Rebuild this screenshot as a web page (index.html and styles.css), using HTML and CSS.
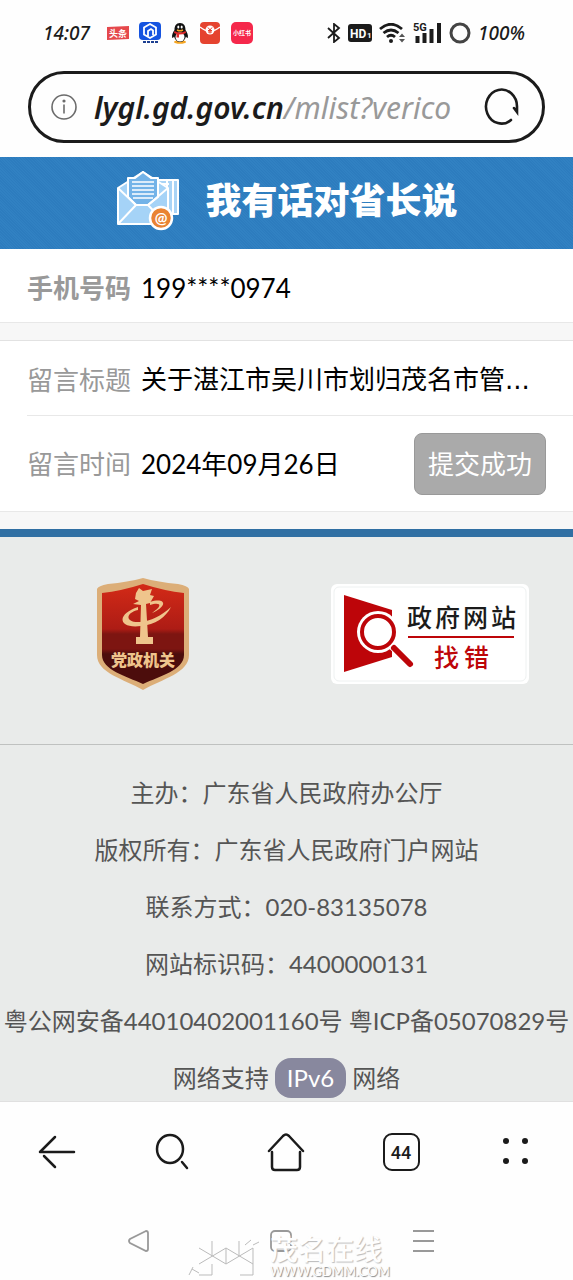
FILE: index.html
```
<!DOCTYPE html>
<html lang="zh-CN">
<head>
  <meta charset="UTF-8" />
  <meta name="viewport" content="width=device-width, initial-scale=1" />
  <title>我有话对省长说</title>
  <link rel="stylesheet" href="styles.css">
</head>
<body>
  <div class="status-bar">
    <span class="clock">14:07</span>
    <div class="apps">
      <svg width="22" height="14" viewBox="0 0 22 14">
        <path d="M0 1l22-1v13L0 14z" fill="#e5484c"/>
        <text x="11" y="11" class="app-text" font-size="9">头条</text>
      </svg>
      <svg width="22" height="22" viewBox="0 0 22 22">
        <rect width="22" height="18" rx="4" fill="#1554e0"/>
        <path d="M11 2l6 3.500v7L11 16l-6-3.500v-7z" fill="none" stroke="#fff" stroke-width="1.800"/>
        <path d="M9 14V9l3-2 2 1.500V13" fill="none" stroke="#fff" stroke-width="1.800"/>
        <path d="M4 20h3m1 0h3m1 0h3m1 0h3" stroke="#1d3f91" stroke-width="2"/>
      </svg>
      <svg width="18" height="22" viewBox="0 0 18 22">
        <ellipse cx="9" cy="20" rx="6" ry="1.800" fill="#f5a623"/>
        <path d="M9 1c-4 0-5.500 3-5.500 7C2 10 .500 13 1.200 16c.800 0 1.500-1 1.800-1.500C4 18 6 20 9 20s5-2 6-5.500c.300.500 1 1.500 1.800 1.500.700-3-.800-6-2.300-8 0-4-1.500-7-5.500-7z" fill="#111"/>
        <ellipse cx="9" cy="15" rx="4.500" ry="4.500" fill="#fff"/>
        <ellipse cx="7.300" cy="5" rx="1" ry="1.500" fill="#fff"/>
        <ellipse cx="10.700" cy="5" rx="1" ry="1.500" fill="#fff"/>
        <path d="M6 8q3 1.500 6 0" stroke="#f5a623" stroke-width="1.500" fill="none"/>
        <path d="M3.500 9q5.500 3 11 0l.500 2q-3 1.500-7 1.500v3H5.500V12L3 11z" fill="#e02a2a"/>
      </svg>
      <svg width="22" height="22" viewBox="0 0 22 22">
        <rect x="1" width="20" height="22" rx="4" fill="#e5432f"/>
        <path d="M1 5q5 4 10 4t10-4" stroke="#fff" stroke-width="1.500" fill="none"/>
        <circle cx="11" cy="8" r="4.500" fill="#fff"/>
        <path d="M9 5.500l2 2.500 2-2.500M11 8v3.500M9 8.500h4M9 10h4" stroke="#e5432f" fill="none"/>
      </svg>
      <svg width="22" height="22" viewBox="0 0 22 22">
        <rect width="22" height="22" rx="5" fill="#f5284b"/>
        <text x="11" y="13" class="app-text" font-size="6">小红书</text>
      </svg>
    </div>
    <div class="signals">
      <svg width="14" height="20" viewBox="0 0 14 20">
        <path d="M1 5l11 10-5 4V1l5 4L1 15" fill="none" stroke="#1b1b1b" stroke-width="1.800"/>
      </svg>
      <svg width="24" height="18" viewBox="0 0 24 18">
        <rect width="24" height="18" rx="3" fill="#1b1b1b"/>
        <text x="2" y="14" class="hd" font-size="12">HD</text>
        <text x="19" y="14" class="hd" font-size="8">1</text>
      </svg>
      <svg width="27" height="20" viewBox="0 0 27 20">
        <path d="M1 6q11-9.500 22 0M4.500 10q7.500-6 15 0M8 14q4-3.500 8 0" fill="none" stroke="#1b1b1b" stroke-width="2.800"/>
        <circle cx="12" cy="18" r="2" fill="#1b1b1b"/>
        <path d="M20 14l3-3.500 3 3.500zM20 16l3 3.500 3-3.500z" fill="#555"/>
      </svg>
      <svg width="29" height="22" viewBox="0 0 29 22">
        <text x="0" y="9" class="net" font-size="11">5G</text>
        <path d="M4.500 21v-7M11.500 21V11M18.500 21V7M26 21V1" stroke="#1b1b1b" stroke-width="4"/>
      </svg>
      <svg width="22" height="22" viewBox="0 0 22 22">
        <circle cx="11" cy="11" r="9" fill="none" stroke="#444" stroke-width="3"/>
      </svg>
      <span class="battery">100%</span>
    </div>
  </div>

  <header class="browser-bar">
    <div class="address">
      <button type="button" class="icon-btn" aria-label="网站信息">
        <svg width="28" height="28" viewBox="0 0 28 28" fill="none" stroke="#6b6b6b" stroke-width="1.600">
          <circle cx="14" cy="14" r="12"/>
          <path d="M14 11.500v9"/>
          <circle cx="14" cy="8" r=".800" fill="#6b6b6b"/>
        </svg>
      </button>
      <button type="button" class="url"><b>lygl.gd.gov.cn</b>/mlist?verico</button>
      <button type="button" class="icon-btn" aria-label="刷新">
        <svg width="38" height="38" viewBox="0 0 38 38" fill="none" stroke="#1b1b1b" stroke-width="2.600" stroke-linecap="round">
          <path d="M28 32A15.500 17 0 1 1 34 19v5l-3-4"/>
        </svg>
      </button>
    </div>
  </header>

  <main>
    <div class="banner">
      <svg width="64" height="62" viewBox="0 0 64 62" stroke="#fff" stroke-width="2" stroke-linejoin="round">
        <path d="M34 10h27v34H34z" fill="#a9d4f6"/>
        <path d="M40 14h12M50 11v34M56 11v34" fill="none"/>
        <path d="M1 18L26 2l25 16v36H1z" fill="#a5d3f7"/>
        <path d="M11 27V8h7l8-6 8 6h7v19L31 35H19z" fill="#73b3e8"/>
        <path d="M15 12h22M15 16h22M15 20h22M15 24h22M16 28h20" fill="none" stroke-width="1.600"/>
        <path d="M1 54l18-19h12l18 19M1 18l18 17M51 18L31 35" fill="none"/>
        <circle cx="44" cy="48" r="11" fill="#e98332" stroke-width="2.500"/>
        <text x="44" y="53" text-anchor="middle" class="at" font-size="15" stroke="none">@</text>
      </svg>
      <h1>我有话对省长说</h1>
    </div>

    <section class="card phone-card">
      <div class="row">
        <span class="name strong">手机号码</span>
        <span class="value">199****0974</span>
      </div>
    </section>

    <section class="card message-card">
      <div class="row title-row">
        <span class="name">留言标题</span>
        <span class="value ellipsis">关于湛江市吴川市划归茂名市管...</span>
      </div>
      <div class="row time-row">
        <span class="name">留言时间</span>
        <span class="value">2024年09月26日</span>
        <button type="button" class="state">提交成功</button>
      </div>
    </section>

    <footer class="site-footer">
      <div class="marks">
        <a href="#" aria-label="党政机关">
          <svg width="94" height="114" viewBox="0 0 94 114">
            <defs>
              <linearGradient id="shield" x1="0" y1="0" x2="0" y2="1">
                <stop offset="0" stop-color="#d32a17"/>
                <stop offset=".45" stop-color="#ad1c15"/>
                <stop offset=".5" stop-color="#7d1511"/>
                <stop offset=".65" stop-color="#7d1511"/>
                <stop offset=".7" stop-color="#4c0d0c"/>
              </linearGradient>
            </defs>
            <path d="M1 12Q2 9 12 7q20-2 35-6 15 4 35 6 10 2 11 5v66c0 18-27 24-46 35C28 102 1 96 1 78z" fill="#dcae78"/>
            <path d="M6 16Q25 14 47 7q22 7 41 9v62c0 15-24 21-41 29C30 99 6 93 6 78z" fill="url(#shield)"/>
            <path d="M43 24l-4-2 1-6 3-5 4 3 9-2-2 6 4 1-4 7-4 1 2 33h5v7H40v-7h4l1-32-8-1z" fill="#efc48c"/>
            <path d="M42 30C20 37 22 52 45 49c14-1 25-9 30-19-10 9-20 14-31 15-15 1-15-9-2-12z" fill="#efc48c"/>
            <path d="M54 28c10-3 14 0 2 8 18-8 12-16-2-11z" fill="#efc48c"/>
            <text x="47" y="89" text-anchor="middle" class="shield-text" font-size="16">党政机关</text>
          </svg>
        </a>
        <a href="#" aria-label="政府网站找错">
          <svg width="198" height="100" viewBox="0 0 198 100">
            <rect width="198" height="100" rx="6" fill="#fff"/>
            <rect x="3" y="3" width="192" height="94" rx="5" fill="none" stroke="#eef1f1" stroke-width="1"/>
            <path d="M13 11l48 15v47L13 88z" fill="#bd0509"/>
            <path d="M50 50l32 30" stroke="#fff" stroke-width="10"/>
            <circle cx="47" cy="48" r="21" fill="#fff"/>
            <circle cx="47" cy="48" r="16" fill="#fff" stroke="#bd0509" stroke-width="4"/>
            <path d="M63 64l16 16" stroke="#bd0509" stroke-width="6" stroke-linecap="round"/>
            <text x="76" y="43" font-size="25" class="mark-text">政</text>
            <text x="104" y="43" font-size="25" class="mark-text">府</text>
            <text x="132" y="43" font-size="25" class="mark-text">网</text>
            <text x="160" y="43" font-size="25" class="mark-text">站</text>
            <path d="M77 53h106" stroke="#bd0509" stroke-width="2"/>
            <text x="103" y="83" font-size="25" class="mark-text red">找</text>
            <text x="133" y="83" font-size="25" class="mark-text red">错</text>
          </svg>
        </a>
      </div>
      <div class="info">
        <p>主办：广东省人民政府办公厅</p>
        <p>版权所有：广东省人民政府门户网站</p>
        <p>联系方式：020-83135078</p>
        <p>网站标识码：4400000131</p>
        <p class="record">粤公网安备44010402001160号 粤ICP备05070829号</p>
        <p class="support">网络支持<span class="ipv6">IPv6</span>网络</p>
      </div>
    </footer>
  </main>

  <nav class="toolbar">
    <button type="button" aria-label="后退">
      <svg width="40" height="40" viewBox="0 0 40 40">
        <path d="M37 20H3L18 5M7 24l11 11"/>
      </svg>
    </button>
    <button type="button" aria-label="搜索">
      <svg width="40" height="40" viewBox="0 0 40 40">
        <ellipse cx="18" cy="17" rx="13" ry="14"/>
        <path d="M30 30l5 6"/>
      </svg>
    </button>
    <button type="button" aria-label="主页">
      <svg width="40" height="40" viewBox="0 0 40 40">
        <path d="M3 19L17 4q3-3 6 0l14 15M6 20v15q0 3 3 3h22q3 0 3-3V20"/>
      </svg>
    </button>
    <button type="button" aria-label="标签页">
      <span class="tabs">44</span>
    </button>
    <button type="button" aria-label="更多">
      <svg width="40" height="40" viewBox="0 0 40 40" class="dots">
        <circle cx="10" cy="9" r="3"/>
        <circle cx="29" cy="9" r="3"/>
        <circle cx="10" cy="29" r="3"/>
        <circle cx="29" cy="29" r="3"/>
      </svg>
    </button>
  </nav>

  <div class="system-nav">
    <button type="button" aria-label="返回">
      <svg width="24" height="24" viewBox="0 0 24 24">
        <path d="M19 2L3 10q-2 2 0 4l16 8q2 0 2-2V4q0-2-2-2z"/>
      </svg>
    </button>
    <button type="button" aria-label="桌面">
      <svg width="24" height="24" viewBox="0 0 24 24">
        <rect x="2" y="2" width="20" height="20" rx="4"/>
      </svg>
    </button>
    <button type="button" aria-label="最近任务">
      <svg width="24" height="24" viewBox="0 0 24 24">
        <path d="M2 2h21M2 12h21M2 22h21"/>
      </svg>
    </button>
    <!-- forum stamp over the navigation keys -->
    <div class="stamp">
      <svg width="78" height="40" viewBox="0 0 78 40" fill="none" stroke="#bbb">
        <path d="M11 11l27 16 27-16M11 27l27-16 27 16M24 4v15M38 11v16M51 4v15M24 27v11H11M65 11v27H52"/>
        <path d="M1 38l4-8M4 32l7 4M57 8l6-5M65 8l6-3"/>
      </svg>
      <div class="stamp-text">
        <span class="stamp-name">茂名在线</span>
        <span class="stamp-site">WWW.GDMM.COM</span>
      </div>
    </div>
  </div>
</body>
</html>
```
FILE: styles.css
```
* {
  box-sizing: border-box;
}

body {
  margin: 0;
  min-height: 100vh;
  display: flex;
  flex-direction: column;
  background: #fefefe;
  font-family: Lato, "Noto Sans CJK SC", sans-serif;
  color: #000;
}

button {
  padding: 0;
  border: none;
  background: none;
  font-family: inherit;
  color: inherit;
  cursor: pointer;
}

svg {
  display: block;
  flex-shrink: 0;
}

/* phone status bar */
.status-bar {
  display: flex;
  align-items: center;
  height: 66px;
  padding: 0 48px 0 43px;
  font-family: "Noto Sans", sans-serif;
  font-size: 19px;
  font-style: italic;
  font-weight: 500;
  color: #1b1b1b;
}

.apps,
.signals {
  display: flex;
  align-items: center;
}

.apps {
  gap: 10px;
  margin-left: 17px;
}

.signals {
  gap: 7px;
  margin-left: auto;
}

.app-text {
  font-family: "Noto Sans CJK SC", sans-serif;
  font-style: normal;
  font-weight: 700;
  text-anchor: middle;
  fill: #fff;
}

.hd,
.net {
  font-family: Roboto, sans-serif;
  font-style: normal;
  font-weight: 700;
  fill: #fff;
}

.net {
  fill: #1b1b1b;
}

/* browser address */
.browser-bar {
  padding: 5px 28px 14px;
}

.address {
  display: flex;
  align-items: center;
  gap: 16px;
  height: 72px;
  padding: 0 21px 0 19px;
  border: 3px solid #1b1b1b;
  border-radius: 36px;
}

.url {
  flex: 1;
  min-width: 0;
  overflow: hidden;
  white-space: nowrap;
  text-align: left;
  font-family: "Noto Sans", sans-serif;
  font-size: 30px;
  font-style: italic;
  color: #999;
}

.url b {
  font-weight: 600;
  color: #1b1b1b;
}

/* page */
.banner {
  display: flex;
  justify-content: center;
  gap: 24px;
  height: 92px;
  padding: 13px 0 0 2px;
  background: repeating-linear-gradient(45deg, #2d7cbe 0 1px, #3181c2 1px 2px);
}

.banner h1 {
  margin: 0;
  font-size: 36px;
  line-height: 60px;
  font-weight: 900;
  color: #fff;
}

.at {
  font-family: Lato, sans-serif;
  font-weight: 700;
  fill: #fff;
}

main {
  background: #f7f7f7;
}

.card {
  padding-left: 27px;
  margin-bottom: 17px;
  background: #fff;
  border-bottom: 1px solid #e8e8e8;
}

.message-card {
  border-top: 1px solid #e2e2e2;
}

.row {
  display: flex;
  align-items: center;
  gap: 10px;
  padding-right: 27px;
  font-size: 26px;
  line-height: 40px;
}

.phone-card .row {
  height: 73px;
  padding-top: 4px;
}

.title-row {
  height: 75px;
  padding-top: 4px;
  border-bottom: 1px solid #e8e8e8;
}

.time-row {
  height: 95px;
}

.name {
  flex-shrink: 0;
  color: #999;
}

.strong {
  font-weight: 700;
}

.ellipsis {
  overflow: hidden;
  white-space: nowrap;
  text-overflow: ellipsis;
  font-family: "DejaVu Sans", "Noto Sans CJK SC", sans-serif;
}

.state {
  margin-left: auto;
  padding: 10px 13px;
  border: 1px solid #999;
  border-radius: 8px;
  background: #aaa;
  font-size: 26px;
  line-height: 40px;
  color: #fff;
}

.site-footer {
  border-top: 8px solid #306fa3;
  background: #e9ebea;
  color: #555;
}

.marks {
  display: flex;
  align-items: center;
  padding: 40px 0 53px;
  border-bottom: 1px solid #bfc1c0;
}

.marks a {
  flex: 1;
  display: flex;
  justify-content: center;
}

.shield-text {
  font-weight: 900;
  fill: #efc48c;
}

.mark-text {
  font-weight: 500;
  fill: #1b1b1b;
}

.red {
  fill: #bd0509;
}

.info {
  display: flex;
  flex-direction: column;
  gap: 17px;
  padding: 28px 0 3px;
  font-size: 24px;
  line-height: 40px;
  text-align: center;
}

.info p {
  margin: 0;
}

.info .record {
  white-space: nowrap;
}

.info .support {
  display: flex;
  justify-content: center;
  gap: 6px;
}

.ipv6 {
  padding: 0 12px;
  border-radius: 16px;
  background: #88889e;
  color: #fff;
}

/* browser toolbar */
.toolbar {
  display: flex;
  align-items: center;
  height: 100px;
  border-top: 1px solid #e0e0e0;
}

.toolbar button {
  flex: 1;
  display: flex;
  justify-content: center;
}

.toolbar svg {
  fill: none;
  stroke: #1b1b1b;
  stroke-width: 2.5;
  stroke-linecap: round;
  stroke-linejoin: round;
}

.toolbar .dots {
  fill: #1b1b1b;
  stroke: none;
}

.tabs {
  width: 37px;
  height: 38px;
  border: 2px solid #1b1b1b;
  border-radius: 9px;
  font-family: Roboto, sans-serif;
  font-size: 18px;
  line-height: 35px;
  font-weight: 500;
  color: #1b1b1b;
}

/* system keys */
.system-nav {
  position: relative;
  flex: 1;
  display: flex;
  align-items: center;
  padding: 0 79px 0 68px;
}

.system-nav button {
  flex: 1;
  display: flex;
  justify-content: center;
}

.system-nav button svg {
  fill: none;
  stroke: #999;
  stroke-width: 1.8;
}

.stamp {
  position: absolute;
  left: 188px;
  bottom: 3px;
  display: flex;
  align-items: flex-end;
  gap: 4px;
  pointer-events: none;
}

.stamp-text {
  display: flex;
  flex-direction: column;
}

.stamp-name {
  font-size: 28px;
  line-height: 32px;
  font-weight: 500;
  color: #fefefe;
  text-shadow: 1px 1px 1px #bbb;
}

.stamp-site {
  font-size: 13px;
  line-height: 12px;
  color: #fefefe;
  text-shadow: 1px 1px 1px #888;
}
```
